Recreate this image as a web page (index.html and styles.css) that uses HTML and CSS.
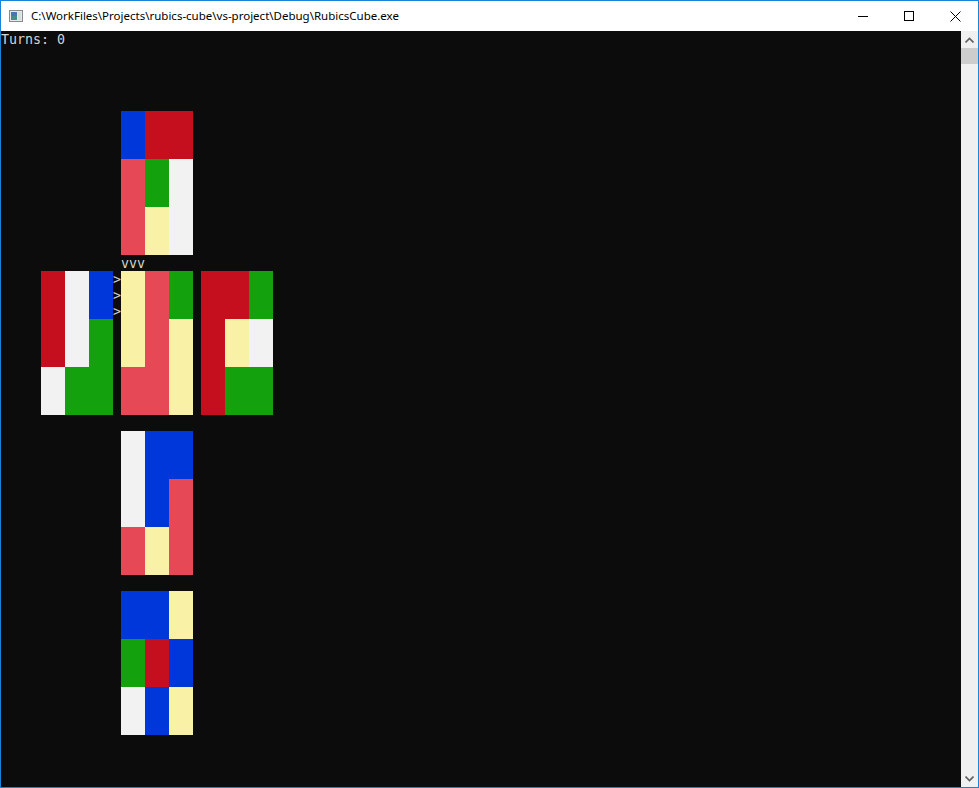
FILE: index.html
```html
<!DOCTYPE html>
<html>
<head>
<meta charset="utf-8">
<title>RubicsCube</title>
<link rel="stylesheet" href="styles.css">
</head>
<body>
<div class="window">
  <div class="titlebar">
    <svg class="app-icon" width="14" height="12" viewBox="0 0 14 12">
      <rect x="0.5" y="0.5" width="13" height="11" fill="#e8e8e8" stroke="#8a8a8a"/>
      <rect x="2" y="2" width="6" height="8" fill="#3f8f8a"/>
      <rect x="2" y="2" width="6" height="4" fill="#4a74b8"/>
      <rect x="9" y="2" width="3" height="8" fill="#cfe3de"/>
    </svg>
    <span class="title">C:\WorkFiles\Projects\rubics-cube\vs-project\Debug\RubicsCube.exe</span>
    <div class="controls">
      <div class="ctl"><svg width="10" height="10" viewBox="0 0 10 10"><path d="M0 5.5H10" stroke="#000" stroke-width="1"/></svg></div>
      <div class="ctl"><svg width="10" height="10" viewBox="0 0 10 10"><rect x="0.5" y="0.5" width="9" height="9" fill="none" stroke="#000"/></svg></div>
      <div class="ctl"><svg width="11" height="11" viewBox="0 0 11 11"><path d="M0.5 0.5L10.5 10.5M10.5 0.5L0.5 10.5" stroke="#000" stroke-width="1"/></svg></div>
    </div>
  </div>
  <div class="main">
    <div class="console">
      <div class="line turns">Turns: 0</div>
      <div class="marks-v">vvv</div>
      <div class="mark m1">&gt;</div>
      <div class="mark m2">&gt;</div>
      <div class="mark m3">&gt;</div>

      <div class="face f-top">
        <i class="b"></i><i class="r"></i><i class="r"></i>
        <i class="lr"></i><i class="g"></i><i class="w"></i>
        <i class="lr"></i><i class="y"></i><i class="w"></i>
      </div>
      <div class="face f-left">
        <i class="r"></i><i class="w"></i><i class="b"></i>
        <i class="r"></i><i class="w"></i><i class="g"></i>
        <i class="w"></i><i class="g"></i><i class="g"></i>
      </div>
      <div class="face f-front">
        <i class="y"></i><i class="lr"></i><i class="g"></i>
        <i class="y"></i><i class="lr"></i><i class="y"></i>
        <i class="lr"></i><i class="lr"></i><i class="y"></i>
      </div>
      <div class="face f-right">
        <i class="r"></i><i class="r"></i><i class="g"></i>
        <i class="r"></i><i class="y"></i><i class="w"></i>
        <i class="r"></i><i class="g"></i><i class="g"></i>
      </div>
      <div class="face f-down">
        <i class="w"></i><i class="b"></i><i class="b"></i>
        <i class="w"></i><i class="b"></i><i class="lr"></i>
        <i class="lr"></i><i class="y"></i><i class="lr"></i>
      </div>
      <div class="face f-back">
        <i class="b"></i><i class="b"></i><i class="y"></i>
        <i class="g"></i><i class="r"></i><i class="b"></i>
        <i class="w"></i><i class="b"></i><i class="y"></i>
      </div>
    </div>
    <div class="scrollbar">
      <div class="arrow">
        <svg width="9" height="6" viewBox="0 0 9 6"><path d="M0.5 5.5L4.5 1.5L8.5 5.5" fill="none" stroke="#606060" stroke-width="1.6"/></svg>
      </div>
      <div class="thumb"></div>
      <div class="track"></div>
      <div class="arrow">
        <svg width="9" height="6" viewBox="0 0 9 6"><path d="M0.5 0.5L4.5 4.5L8.5 0.5" fill="none" stroke="#606060" stroke-width="1.6"/></svg>
      </div>
    </div>
  </div>
</div>
</body>
</html>
```

FILE: styles.css
```css
* { box-sizing: border-box; }
html, body { margin: 0; padding: 0; background: #ffffff; }

.window {
  width: 979px;
  height: 788px;
  border: 1px solid #1883d7;
  display: flex;
  flex-direction: column;
  overflow: hidden;
}

.titlebar {
  height: 30px;
  flex: none;
  display: flex;
  align-items: center;
  background: #ffffff;
}
.app-icon { margin-left: 8px; flex: none; }
.title {
  margin-left: 8px;
  font-family: "Noto Sans", "Open Sans", sans-serif;
  font-size: 11.5px;
  color: #000;
  white-space: nowrap;
  margin-top: -1px;
}
.controls { margin-left: auto; display: flex; height: 30px; }
.ctl {
  width: 46px;
  height: 30px;
  display: flex;
  align-items: center;
  justify-content: center;
}

.main { flex: 1; display: flex; min-height: 0; }

.console {
  width: 960px;
  flex: none;
  background: #0c0c0c;
  display: grid;
  grid-template-columns: repeat(120, 8px);
  grid-template-rows: repeat(47, 16px);
  font-family: "DejaVu Sans Mono", "Liberation Mono", monospace;
  font-size: 13.3px;
  line-height: 16px;
  color: #d4d4d4;
  overflow: hidden;
}
.turns { grid-column: 1 / span 20; grid-row: 1; white-space: pre; padding-top: 1px; }
.marks-v { grid-column: 16 / span 3; grid-row: 15; padding-top: 1px; }
.mark { grid-column: 15; text-align: center; padding-top: 1px; }
.m1 { grid-row: 16; }
.m2 { grid-row: 17; }
.m3 { grid-row: 18; }

.face {
  display: grid;
  grid-template-columns: repeat(3, 24px);
  grid-template-rows: repeat(3, 48px);
  grid-column-end: span 9;
  grid-row-end: span 9;
}
.face i { display: block; }
.f-top { grid-column-start: 16; grid-row-start: 6; }
.f-left { grid-column-start: 6; grid-row-start: 16; }
.f-front { grid-column-start: 16; grid-row-start: 16; }
.f-right { grid-column-start: 26; grid-row-start: 16; }
.f-down { grid-column-start: 16; grid-row-start: 26; }
.f-back { grid-column-start: 16; grid-row-start: 36; }

.b { background: #0037da; }
.r { background: #c50f1f; }
.lr { background: #e74856; }
.g { background: #13a10e; }
.w { background: #f2f2f2; }
.y { background: #f9f1a5; }

.scrollbar {
  width: 17px;
  flex: none;
  background: #f0f0f0;
  display: flex;
  flex-direction: column;
}
.arrow {
  height: 17px;
  display: flex;
  align-items: center;
  justify-content: center;
}
.thumb { height: 16px; background: #cdcdcd; }
.track { flex: 1; }
```
